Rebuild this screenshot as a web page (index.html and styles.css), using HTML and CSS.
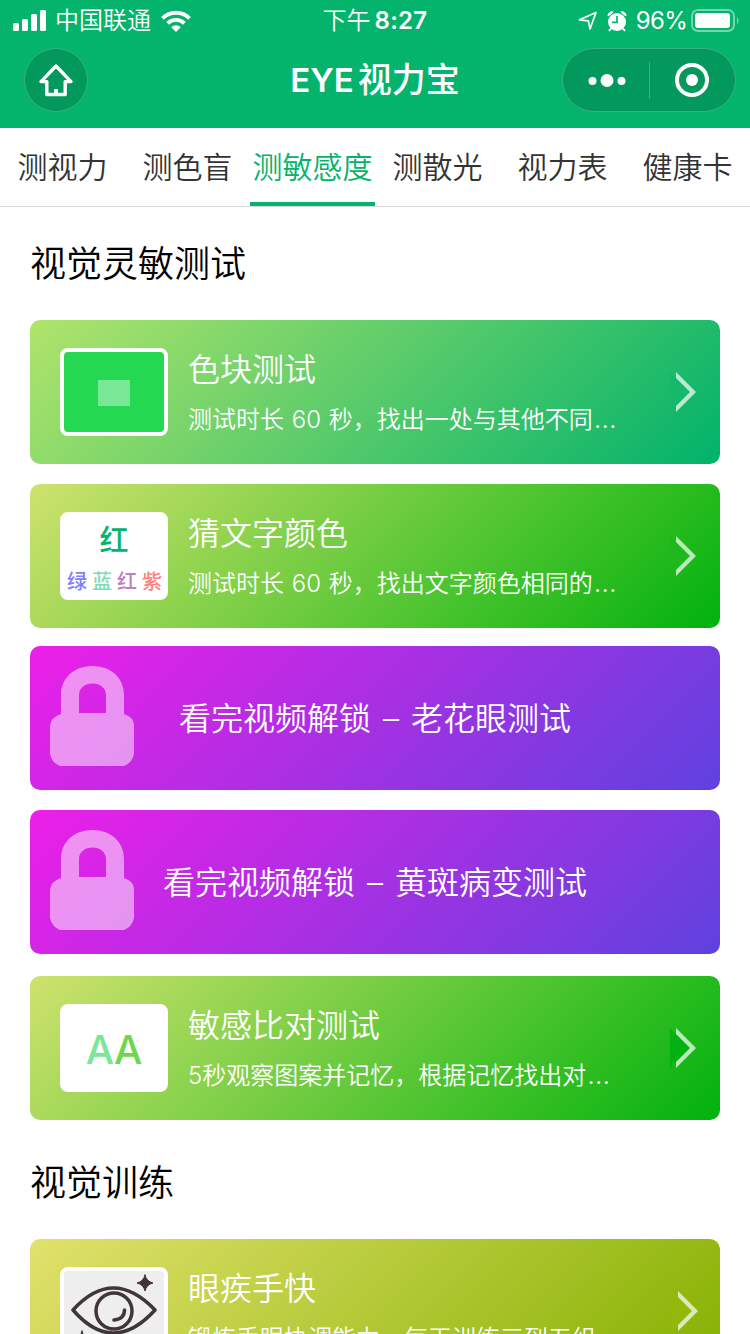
FILE: index.html
```html
<!DOCTYPE html>
<html lang="zh-CN">
<head>
  <meta charset="UTF-8" />
  <meta name="viewport" content="width=device-width, initial-scale=1.0"/>
  <title>EYE视力宝</title>
  <link rel="stylesheet" href="styles.css">
</head>
<body>
  <header class="header">
    <div class="status-bar">
      <div class="status-left">
        <svg width="33" height="22" viewBox="0 0 33 22" fill="#fff">
          <rect x="0" y="13" width="6" height="8" rx="1.5"/>
          <rect x="9" y="9" width="6" height="12" rx="1.5"/>
          <rect x="18" y="4" width="6" height="17" rx="1.5"/>
          <rect x="27" y="0" width="6" height="21" rx="1.5"/>
        </svg>
        <span class="carrier">中国联通</span>
        <svg width="30" height="22" viewBox="0 0 30 22">
          <path d="M1.5 8.3a19.2 19.2 0 0 1 27 0" fill="none" stroke="#fff" stroke-width="4"/>
          <path d="M6.6 13.4a12 12 0 0 1 16.8 0" fill="none" stroke="#fff" stroke-width="3.8"/>
          <path d="M10.2 17.2a6.8 6.8 0 0 1 9.6 0L15 22z" fill="#fff"/>
        </svg>
      </div>
      <div class="status-time">下午<b>8:27</b></div>
      <div class="status-right">
        <svg class="location" width="20" height="20" viewBox="0 0 20 20" fill="none" stroke="#fff" stroke-width="1.7" stroke-linejoin="round">
          <path d="M18 1.5L1.5 8.8l8.9 1.1L12 18z"/>
        </svg>
        <svg class="alarm" width="20" height="21" viewBox="0 0 20 21">
          <circle cx="10" cy="11" r="9" fill="#fff"/>
          <path d="M1 5A4 4 0 0 1 6 .8L4 3zM19 5A4 4 0 0 0 14 .8L16 3z" fill="#fff" stroke="#fff" stroke-width="1"/>
          <path d="M4 17.500l-2 2.500M16 17.500l2 2.500" stroke="#fff" stroke-width="2"/>
          <path d="M10 5v6.300H5" fill="none" stroke="#04b36c" stroke-width="1.700"/>
        </svg>
        <span class="percent">96%</span>
        <svg width="48" height="24" viewBox="0 0 48 24">
          <rect x="1" y="1" width="42" height="21" rx="6" fill="none" stroke="#fff" stroke-opacity=".45" stroke-width="2"/>
          <rect x="4" y="4" width="35" height="15" rx="3" fill="#fff"/>
          <path d="M46 8c2 1 2 6 0 7z" fill="#fff" fill-opacity=".45"/>
        </svg>
      </div>
    </div>

    <div class="nav-bar">
      <a class="home" href="#">
        <svg width="34" height="33" viewBox="0 0 34 33">
          <path d="M17 2L2 17.600h5.800V30.500h18.400V17.600H32z" fill="none" stroke="#fff" stroke-width="3.400" stroke-linejoin="round"/>
          <rect x="15" y="25" width="4" height="5" fill="#fff"/>
        </svg>
      </a>
      <h1>EYE<span>视力宝</span></h1>
      <div class="capsule">
        <svg width="86" height="36" viewBox="0 0 86 36" fill="#fff">
          <circle cx="29.500" cy="19" r="4"/>
          <circle cx="44" cy="18.500" r="6.500"/>
          <circle cx="58.500" cy="19" r="4"/>
        </svg>
        <i></i>
        <svg width="84" height="36" viewBox="0 0 84 36">
          <circle cx="42" cy="18" r="15" fill="none" stroke="#fff" stroke-width="4"/>
          <circle cx="42" cy="18" r="6" fill="#fff"/>
        </svg>
      </div>
    </div>
  </header>

  <nav class="tabs">
    <a class="tab" href="#">测视力</a>
    <a class="tab" href="#">测色盲</a>
    <a class="tab active" href="#">测敏感度</a>
    <a class="tab" href="#">测散光</a>
    <a class="tab" href="#">视力表</a>
    <a class="tab" href="#">健康卡</a>
  </nav>

  <main>
    <h2>视觉灵敏测试</h2>

    <a class="card teal" href="#">
      <div class="thumb block-thumb"><i></i></div>
      <div class="card-text">
        <h3>色块测试</h3>
        <p>测试时长 60 秒，找出一处与其他不同<span class="dots">…</span></p>
      </div>
      <div class="arrow"></div>
    </a>

    <a class="card green" href="#">
      <div class="thumb word-thumb">
        <strong>红</strong>
        <div class="words">
          <span class="blue">绿</span><span class="mint">蓝</span><span class="plum">红</span><span class="coral">紫</span>
        </div>
      </div>
      <div class="card-text">
        <h3>猜文字颜色</h3>
        <p>测试时长 60 秒，找出文字颜色相同的<span class="dots">…</span></p>
      </div>
      <div class="arrow"></div>
    </a>

    <a class="card locked" href="#">
      <svg class="lock" width="84" height="100" viewBox="0 0 84 100">
        <path d="M11 48V29C11 11 25 0 42.500 0S74 11 74 29v19q10 3 10 12v28q-2 9-10 12H10Q2 97 0 88V60q1-9 11-12zM29 47h27V29c0-7-6-11.500-13.500-11.500S29 22 29 29z" fill="#fff" fill-opacity=".5" fill-rule="evenodd"/>
      </svg>
      <span>看完视频解锁 – 老花眼测试</span>
    </a>

    <a class="card locked" href="#">
      <svg class="lock" width="84" height="100" viewBox="0 0 84 100">
        <path d="M11 48V29C11 11 25 0 42.500 0S74 11 74 29v19q10 3 10 12v28q-2 9-10 12H10Q2 97 0 88V60q1-9 11-12zM29 47h27V29c0-7-6-11.500-13.500-11.500S29 22 29 29z" fill="#fff" fill-opacity=".5" fill-rule="evenodd"/>
      </svg>
      <span>看完视频解锁 – 黄斑病变测试</span>
    </a>

    <a class="card green compare" href="#">
      <div class="thumb letter-thumb"><span>A</span><span>A</span></div>
      <div class="card-text">
        <h3>敏感比对测试</h3>
        <p>5秒观察图案并记忆，根据记忆找出对<span class="dots">…</span></p>
      </div>
      <div class="arrow"></div>
    </a>

    <h2 class="second">视觉训练</h2>

    <a class="card olive" href="#">
      <div class="thumb eye-thumb">
        <svg width="100" height="80" viewBox="0 0 100 80" fill="none" stroke="#403639" stroke-width="3.500" stroke-linecap="round" stroke-linejoin="round">
          <path d="M9 39Q49 -5 91 39Q49 85 9 39z"/>
          <circle cx="50" cy="40" r="18"/>
          <path d="M60.500 39q0 9-10.500 10"/>
          <path d="M81 4q1.500 6.500 8 8-6.500 1.500-8 8-1.500-6.500-8-8 6.500-1.500 8-8zM18 60q1.500 6.500 8 8-6.500 1.500-8 8-1.500-6.500-8-8 6.500-1.500 8-8z" fill="#403639" stroke-width="1"/>
        </svg>
      </div>
      <div class="card-text">
        <h3>眼疾手快</h3>
        <p>锻炼手眼协调能力，每天训练三到五组</p>
      </div>
      <div class="arrow"></div>
    </a>
  </main>
</body>
</html>
```

FILE: styles.css
```css
* {
  box-sizing: border-box;
}

body {
  margin: 0;
  height: 1334px;
  overflow: hidden;
  background-color: #fff;
  color: #000;
  font-family: Inter, 'Noto Sans CJK SC', sans-serif;
  font-weight: 350;
}

a {
  color: inherit;
  text-decoration: none;
}

h1, h2, h3, p {
  margin: 0;
  font-weight: inherit;
}

svg {
  display: block;
  flex: none;
}

.header {
  height: 128px;
  background-color: #04b36c;
  color: #fff;
}

.status-bar {
  height: 40px;
  padding: 0 11px 0 13px;
  display: grid;
  grid-template-columns: 1fr auto 1fr;
  align-items: center;
  font-size: 24px;
  line-height: 42px;
}

.status-left, .status-right {
  display: flex;
  align-items: center;
}

.status-left {
  gap: 9px;
}

.carrier {
  width: 97px;
  white-space: nowrap;
}

.status-time {
  margin-left: -2px;
}

.status-time b {
  margin-left: 4px;
  font-weight: 600;
  letter-spacing: 0.3px;
}

.status-right {
  justify-content: flex-end;
}

.alarm {
  margin: 0 9px;
}

.percent {
  margin-right: 4px;
  font-weight: 400;
  letter-spacing: -0.7px;
}

.nav-bar {
  height: 80px;
  padding: 0 14px;
  display: grid;
  grid-template-columns: 1fr auto 1fr;
  align-items: center;
}

.home {
  width: 64px;
  height: 64px;
  margin-left: 10px;
  display: flex;
  align-items: center;
  justify-content: center;
  border-radius: 50%;
  background-color: #03985c;
  border: 1px solid #39b17f;
}

h1 {
  font-size: 33px;
  line-height: 66px;
  font-weight: 600;
}

h1 span {
  margin-left: 4px;
  font-size: 34px;
  font-weight: 500;
}

.capsule {
  justify-self: end;
  width: 174px;
  height: 64px;
  display: flex;
  align-items: center;
  border-radius: 32px;
  background-color: #03985c;
  border: 1px solid #39b17f;
}

.capsule i {
  width: 1px;
  height: 37px;
  background-color: #39b17f;
}

.tabs {
  height: 79px;
  display: grid;
  grid-template-columns: repeat(6, 1fr);
  border-bottom: 1px solid #d8d8d8;
}

.tab {
  height: 78px;
  line-height: 79px;
  text-align: center;
  font-size: 30px;
  color: #333;
}

.tab.active {
  color: #04b36c;
  border-bottom: 4px solid #04b36c;
}

main {
  padding: 0 30px;
}

h2 {
  height: 113px;
  line-height: 114px;
  font-size: 36px;
}

h2.second {
  height: 119px;
  line-height: 126px;
}

.card {
  height: 144px;
  margin-bottom: 20px;
  padding: 28px 24px 28px 30px;
  display: flex;
  border-radius: 10px;
  color: #fff;
}

.teal {
  background: linear-gradient(135deg, #b0e46b, #00b26a);
}

.green {
  margin-bottom: 18px;
  background: linear-gradient(135deg, #cfe26d, #00b20c);
}

.olive {
  margin-bottom: 0;
  background: linear-gradient(135deg, #e1e16c, #84b000);
}

.locked {
  position: relative;
  align-items: center;
  justify-content: center;
  padding: 0 20px 5px;
  font-size: 32px;
  word-spacing: 3px;
  background: linear-gradient(135deg, #ed1fe8, #5e42de);
}

.compare {
  margin-top: 22px;
  margin-bottom: 0;
}

.lock {
  position: absolute;
  left: 20px;
  top: 20px;
}

.thumb {
  width: 108px;
  height: 88px;
  flex: none;
  border: 4px solid #fff;
  border-radius: 8px;
  background-color: #fff;
}

.block-thumb {
  display: flex;
  align-items: center;
  justify-content: center;
  background-color: #24d852;
}

.block-thumb i {
  width: 32px;
  height: 26px;
  margin-top: 2px;
  background-color: #7ae797;
}

.word-thumb {
  text-align: center;
}

.word-thumb strong {
  display: block;
  font-size: 29px;
  line-height: 50px;
  font-weight: 500;
  color: #04b36c;
}

.words {
  display: flex;
  justify-content: space-between;
  padding: 0 2px 0 3px;
  font-size: 20px;
  line-height: 32px;
  font-weight: 500;
}

.blue {
  color: #8080ff;
}

.mint {
  color: #82d9b5;
}

.plum {
  color: #bf80bf;
}

.coral {
  color: #ff8080;
}

.letter-thumb {
  display: flex;
  justify-content: center;
  font-size: 40px;
  line-height: 83px;
  font-weight: 500;
  color: #6fd651;
}

.letter-thumb span:first-child {
  color: #7ae797;
}

.eye-thumb {
  background-color: #eee;
}

.card-text {
  flex: 1;
  padding-left: 20px;
  white-space: nowrap;
}

h3 {
  font-size: 32px;
  line-height: 43px;
}

.card-text p {
  margin-top: 11px;
  font-size: 24px;
  line-height: 36px;
  word-spacing: 1px;
}

.dots {
  margin-left: 1px;
  font-size: 27px;
  line-height: 1;
}

/* chevron: pale triangle with a second one in the card colour on top */
.arrow {
  position: relative;
  align-self: center;
  border: 20px solid transparent;
  border-right-width: 0;
  border-left-color: rgba(255, 255, 255, 0.7);
}

.arrow::after {
  content: '';
  position: absolute;
  left: -26px;
  top: -20px;
  border: 20px solid transparent;
  border-right-width: 0;
}

.teal .arrow::after {
  border-left-color: #16b86b;
}

.green .arrow::after {
  border-left-color: #1db81b;
}

.compare .arrow::after {
  border-left-color: #02b210;
}

.olive .arrow {
  left: 2px;
}

.olive .arrow::after {
  border-left-color: #93b90f;
}
```
